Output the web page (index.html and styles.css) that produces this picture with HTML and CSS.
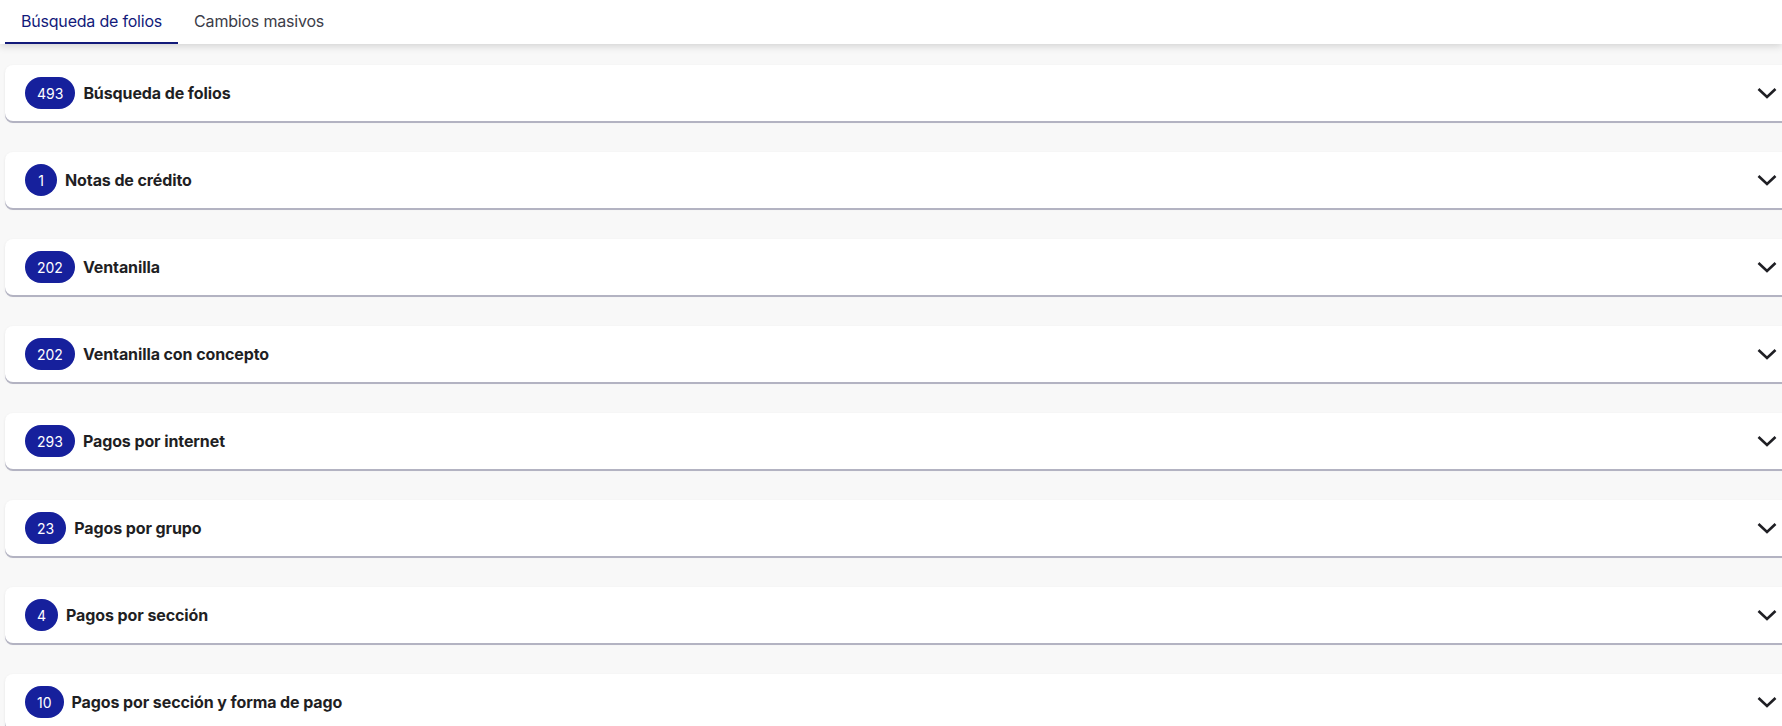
FILE: index.html
```html
<!DOCTYPE html>
<html lang="es">
<head>
    <meta charset="UTF-8">
    <meta name="viewport" content="width=device-width, initial-scale=1.0">
    <title>Búsqueda de folios</title>
    <link rel="stylesheet" href="styles.css">
</head>
<body>
    <nav class="tabs">
        <div class="tab active">Búsqueda de folios</div>
        <div class="tab">Cambios masivos</div>
    </nav>
    <div class="list">
        <div class="card">
            <span class="badge">493</span>
            <span class="title">Búsqueda de folios</span>
            <svg class="chevron" viewBox="0 0 24 24"><polyline points="3.5,8 12,16 20.5,8"/></svg>
        </div>
        <div class="card">
            <span class="badge">1</span>
            <span class="title">Notas de crédito</span>
            <svg class="chevron" viewBox="0 0 24 24"><polyline points="3.5,8 12,16 20.5,8"/></svg>
        </div>
        <div class="card">
            <span class="badge">202</span>
            <span class="title">Ventanilla</span>
            <svg class="chevron" viewBox="0 0 24 24"><polyline points="3.5,8 12,16 20.5,8"/></svg>
        </div>
        <div class="card">
            <span class="badge">202</span>
            <span class="title">Ventanilla con concepto</span>
            <svg class="chevron" viewBox="0 0 24 24"><polyline points="3.5,8 12,16 20.5,8"/></svg>
        </div>
        <div class="card">
            <span class="badge">293</span>
            <span class="title">Pagos por internet</span>
            <svg class="chevron" viewBox="0 0 24 24"><polyline points="3.5,8 12,16 20.5,8"/></svg>
        </div>
        <div class="card">
            <span class="badge">23</span>
            <span class="title">Pagos por grupo</span>
            <svg class="chevron" viewBox="0 0 24 24"><polyline points="3.5,8 12,16 20.5,8"/></svg>
        </div>
        <div class="card">
            <span class="badge">4</span>
            <span class="title">Pagos por sección</span>
            <svg class="chevron" viewBox="0 0 24 24"><polyline points="3.5,8 12,16 20.5,8"/></svg>
        </div>
        <div class="card">
            <span class="badge">10</span>
            <span class="title">Pagos por sección y forma de pago</span>
            <svg class="chevron" viewBox="0 0 24 24"><polyline points="3.5,8 12,16 20.5,8"/></svg>
        </div>
    </div>
</body>
</html>
```

FILE: styles.css
```css
body {
    margin: 0;
    font-family: Inter, "Noto Sans", sans-serif;
    background-color: #f8f8f8;
    color: #1f1f24;
    overflow: hidden;
}
.tabs {
    display: flex;
    height: 44px;
    padding-left: 5px;
    background: #fff;
    box-shadow: 0 2px 8px rgba(0, 0, 0, 0.16);
    position: relative;
}
.tab {
    box-sizing: border-box;
    height: 44px;
    padding: 0 16px;
    display: flex;
    align-items: center;
    font-size: 16px;
    letter-spacing: -0.2px;
    color: #3c3c48;
    border-bottom: 2px solid transparent;
}
.tab.active {
    color: #121a7a;
    border-bottom-color: #121a7a;
}
.list {
    display: flex;
    flex-direction: column;
    gap: 31px;
    padding: 21px 0 0 5px;
    margin-right: -20px;
}
.card {
    display: flex;
    align-items: center;
    height: 56px;
    padding: 0 20px;
    background: #fff;
    border-radius: 8px;
    box-shadow: 0 2px 0 #b3b3c2, 0 1px 3px rgba(0, 0, 0, 0.08);
}
.badge {
    box-sizing: border-box;
    min-width: 32px;
    height: 32px;
    padding: 0 12px;
    border-radius: 16px;
    display: flex;
    align-items: center;
    justify-content: center;
    background: #16209c;
    color: #fff;
    font-size: 14px;
    margin-right: 8px;
}
.title {
    font-size: 16px;
    font-weight: 700;
    letter-spacing: -0.1px;
    margin-top: -1px;
}
.chevron {
    margin-left: auto;
    margin-right: 3px;
    width: 24px;
    height: 24px;
    fill: none;
    stroke: #1f1f24;
    stroke-width: 2.6;
}
```
